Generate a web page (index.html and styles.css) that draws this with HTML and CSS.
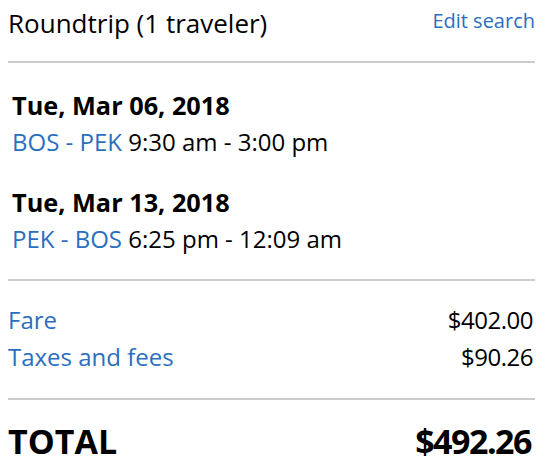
FILE: index.html
```html
<!DOCTYPE html>
<html>
<head>
<meta charset="utf-8">
<link rel="stylesheet" href="styles.css">
</head>
<body>
<div class="summary">
  <div class="header">
    <div class="title">Roundtrip (1 traveler)</div>
    <a class="edit">Edit search</a>
  </div>
  <div class="legs">
    <div class="leg">
      <div class="date">Tue, Mar 06, 2018</div>
      <div class="route"><span class="link">BOS - PEK</span> 9:30 am - 3:00 pm</div>
    </div>
    <div class="leg">
      <div class="date">Tue, Mar 13, 2018</div>
      <div class="route"><span class="link">PEK - BOS</span> 6:25 pm - 12:09 am</div>
    </div>
  </div>
  <div class="fees">
    <div class="row"><span class="link">Fare</span><span class="amount">$402.00</span></div>
    <div class="row"><span class="link">Taxes and fees</span><span class="amount">$90.26</span></div>
  </div>
  <div class="total">
    <span>TOTAL</span><span class="total-amount">$492.26</span>
  </div>
</div>
</body>
</html>
```
FILE: styles.css
```css
html, body {
  margin: 0;
  padding: 0;
  background: #fff;
}
body {
  font-family: "Open Sans", "DejaVu Sans", sans-serif;
  color: #000;
}
.summary {
  padding: 0 11px 0 8px;
}
.header {
  display: flex;
  justify-content: space-between;
  align-items: flex-start;
  padding: 6px 0 20px;
  border-bottom: 2px solid #cccccc;
}
.title {
  font-size: 26px;
  line-height: 35px;
}
.edit {
  font-size: 20px;
  line-height: 28px;
  color: #2a6fbf;
  padding-top: 1px;
}
.link {
  color: #2a6fbf;
}
.legs {
  padding: 26px 0 24px 4px;
  border-bottom: 2px solid #cccccc;
}
.leg + .leg {
  margin-top: 28px;
}
.date {
  font-size: 25.3px;
  font-weight: 700;
  line-height: 32px;
}
.route {
  font-size: 24px;
  line-height: 32px;
  margin-top: 5px;
}
.fees {
  padding: 20px 0 23px;
  border-bottom: 2px solid #cccccc;
}
.row {
  display: flex;
  justify-content: space-between;
  font-size: 24px;
  line-height: 37px;
}
.amount {
  letter-spacing: -0.5px;
  padding-right: 2px;
}
.total {
  display: flex;
  justify-content: space-between;
  font-size: 34px;
  font-weight: 700;
  line-height: 46px;
  padding-top: 18px;
}
.total-amount {
  letter-spacing: -1.5px;
  padding-right: 4px;
}
```
